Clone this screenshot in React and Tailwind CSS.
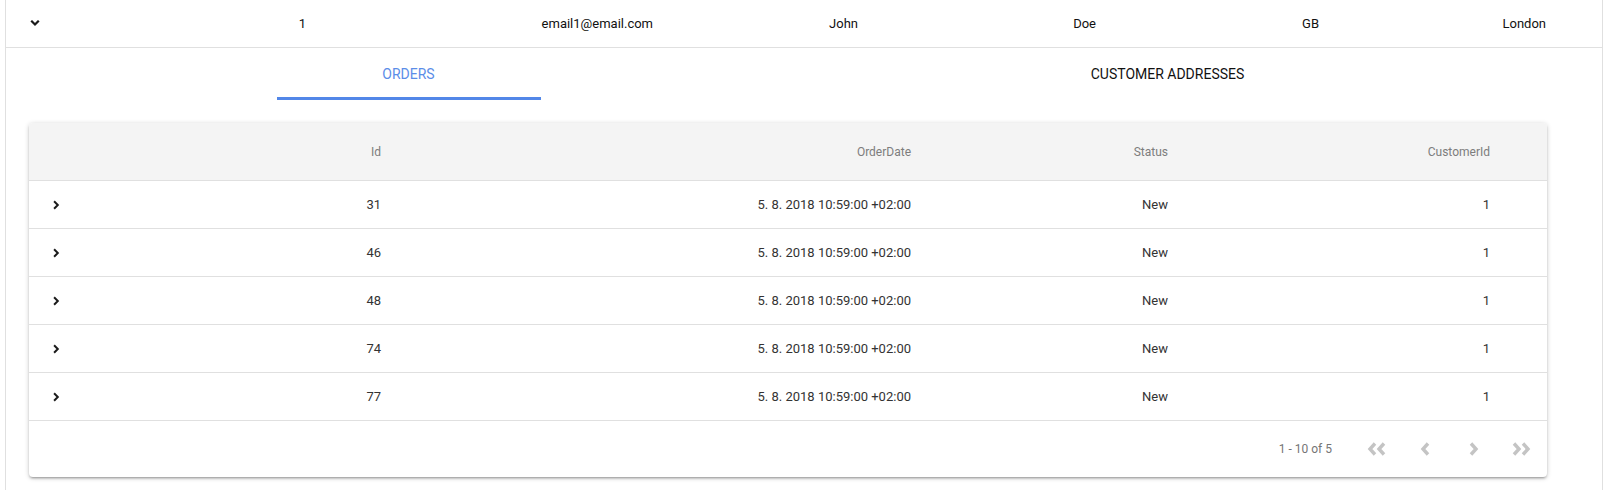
import React from "react";

const orders = [
  { id: 31, date: "5. 8. 2018 10:59:00 +02:00", status: "New", customerId: 1 },
  { id: 46, date: "5. 8. 2018 10:59:00 +02:00", status: "New", customerId: 1 },
  { id: 48, date: "5. 8. 2018 10:59:00 +02:00", status: "New", customerId: 1 },
  { id: 74, date: "5. 8. 2018 10:59:00 +02:00", status: "New", customerId: 1 },
  { id: 77, date: "5. 8. 2018 10:59:00 +02:00", status: "New", customerId: 1 },
];

// small bold chevrons (font-awesome "angle" style)
const AngleDown = () => (
  <svg width="10" height="7" viewBox="0 0 10 7" className="block">
    <polyline points="2,1.5 5,4.5 8,1.5" fill="none" stroke="#1a1a1a" strokeWidth="2.2" strokeLinecap="square" />
  </svg>
);

const AngleRight = () => (
  <svg width="7" height="10" viewBox="0 0 7 10" className="block">
    <polyline points="1.8,2 4.8,5 1.8,8" fill="none" stroke="#1a1a1a" strokeWidth="2" strokeLinecap="square" />
  </svg>
);

const PagerIcon = ({ dir, double }) => {
  const pts =
    dir === "left"
      ? ["8,1.5 3,7 8,12.5", "17,1.5 12,7 17,12.5"]
      : ["3,1.5 8,7 3,12.5", "12,1.5 17,7 12,12.5"];
  return (
    <svg width={double ? 20 : 11} height="14" viewBox={double ? "0 0 20 14" : "0 0 11 14"} className="block">
      <polyline points={pts[0]} fill="none" stroke="#c4c4c4" strokeWidth="3.4" />
      {double && <polyline points={pts[1]} fill="none" stroke="#c4c4c4" strokeWidth="3.4" />}
    </svg>
  );
};

const App = () => {
  return (
    <div className="w-[1608px] h-[490px] bg-white overflow-hidden font-['Roboto',sans-serif]">
      <div className="ml-[5px] w-[1598px] h-full border-x border-[#e0e0e0]">
        {/* outer customer row */}
        <div className="flex items-center h-[48px] border-b border-[#e0e0e0] text-[13px] text-[#111]">
          <div className="w-[74px] pl-[24px]">
            <AngleDown />
          </div>
          <div className="w-[282px] text-right pr-[56px]">1</div>
          <div className="w-[347px] text-right pr-[56px]">email1@email.com</div>
          <div className="w-[205px] text-right pr-[56px]">John</div>
          <div className="w-[238px] text-right pr-[56px]">Doe</div>
          <div className="w-[223px] text-right pr-[56px]">GB</div>
          <div className="flex-1 text-right pr-[56px]">London</div>
        </div>

        {/* detail area */}
        <div className="pl-[23px]">
          <div className="flex w-[1518px] h-[52px] text-[14px]">
            <div className="flex-1 flex justify-center">
              <div className="relative w-[264px] flex items-center justify-center text-[#5b8de8]">
                ORDERS
                <span className="absolute left-0 right-0 bottom-0 h-[3px] bg-[#5287e8]"></span>
              </div>
            </div>
            <div className="flex-1 flex justify-center">
              <div className="w-[264px] flex items-center justify-center text-[#111]">
                CUSTOMER ADDRESSES
              </div>
            </div>
          </div>

          <div className="mt-[23px] w-[1518px] bg-white rounded-[4px] shadow-[0_1px_5px_rgba(0,0,0,0.2),0_2px_2px_rgba(0,0,0,0.14),0_3px_1px_-2px_rgba(0,0,0,0.12)]">
            <div className="flex items-center h-[58px] bg-[#f4f4f4] border-b border-[#e0e0e0] rounded-t-[4px] text-[12px] text-[#7d7d7d]">
              <div className="w-[80px]"></div>
              <div className="w-[328px] text-right pr-[56px]">Id</div>
              <div className="w-[530px] text-right pr-[56px]">OrderDate</div>
              <div className="w-[257px] text-right pr-[56px]">Status</div>
              <div className="flex-1 text-right pr-[57px]">CustomerId</div>
            </div>

            {orders.map((o) => (
              <div
                key={o.id}
                className="flex items-center h-[48px] border-b border-[#e0e0e0] text-[13px] text-[#333]"
              >
                <div className="w-[80px] pl-[24px]">
                  <AngleRight />
                </div>
                <div className="w-[328px] text-right pr-[56px]">{o.id}</div>
                <div className="w-[530px] text-right pr-[56px]">{o.date}</div>
                <div className="w-[257px] text-right pr-[56px]">{o.status}</div>
                <div className="flex-1 text-right pr-[57px]">{o.customerId}</div>
              </div>
            ))}

            <div className="flex items-center justify-end h-[56px] pr-[2px] text-[12px] text-[#757575]">
              <span className="mr-[21px]">1 - 10 of 5</span>
              <div className="w-[48px] h-[48px] flex items-center justify-center">
                <PagerIcon dir="left" double />
              </div>
              <div className="w-[48px] h-[48px] flex items-center justify-center">
                <PagerIcon dir="left" />
              </div>
              <div className="w-[48px] h-[48px] flex items-center justify-center">
                <PagerIcon dir="right" />
              </div>
              <div className="w-[48px] h-[48px] flex items-center justify-center">
                <PagerIcon dir="right" double />
              </div>
            </div>
          </div>
        </div>
      </div>
    </div>
  );
};

export default App;
